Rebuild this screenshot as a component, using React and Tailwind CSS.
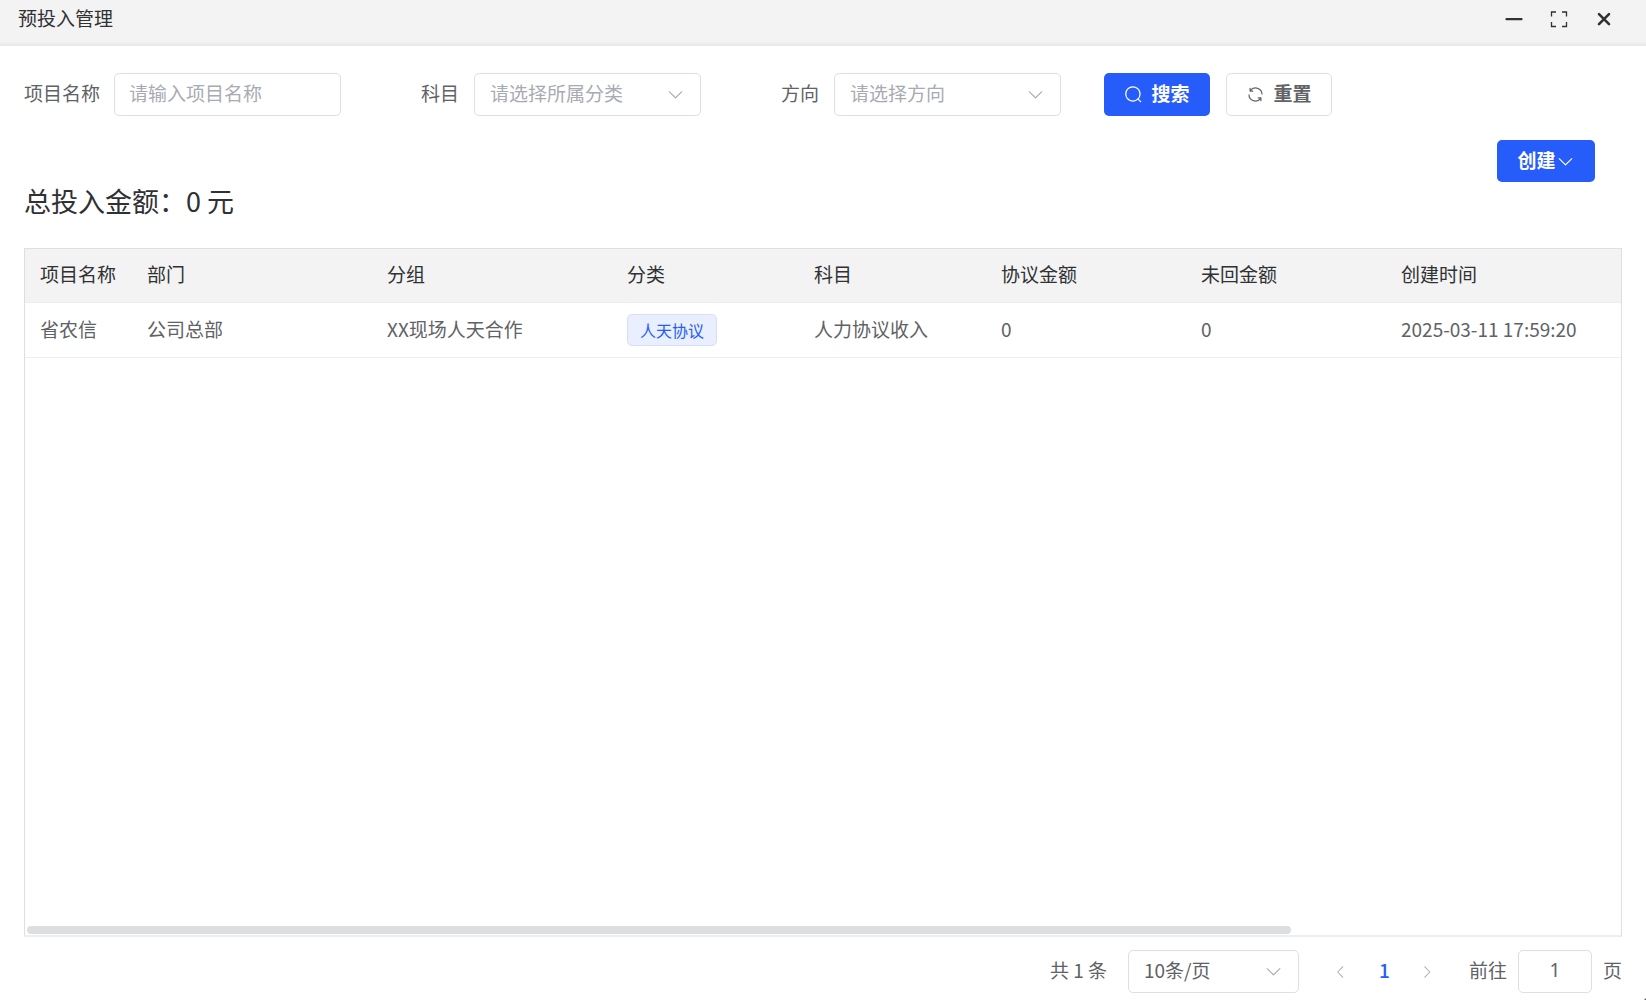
import { useState } from 'react';
import clsx from 'clsx';

const icons = {
    arrowDown: 'M831.872 340.864 512 652.672 192.128 340.864a30.592 30.592 0 0 0-42.752 0 29.12 29.12 0 0 0 0 41.6L489.664 714.24a32 32 0 0 0 44.672 0l340.288-331.712a29.12 29.12 0 0 0 0-41.728 30.592 30.592 0 0 0-42.752 0z',
    arrowLeft: 'M609.408 149.376 277.76 489.6a32 32 0 0 0 0 44.672l331.648 340.352a29.12 29.12 0 0 0 41.728 0 30.592 30.592 0 0 0 0-42.752L339.264 511.936l311.872-319.872a30.592 30.592 0 0 0 0-42.688 29.12 29.12 0 0 0-41.728 0z',
    arrowRight: 'M340.864 149.312a30.592 30.592 0 0 0 0 42.752L652.736 512 340.864 831.872a30.592 30.592 0 0 0 0 42.752 29.12 29.12 0 0 0 41.728 0L714.24 534.336a32 32 0 0 0 0-44.672L382.592 149.376a29.12 29.12 0 0 0-41.728 0z',
    search: 'm795.904 750.72 124.992 124.928a32 32 0 0 1-45.248 45.248L750.656 795.904a416 416 0 1 1 45.248-45.248zM480 832a352 352 0 1 0 0-704 352 352 0 0 0 0 704z',
    refresh: 'M771.776 794.88A384 384 0 0 1 128 512h64a320 320 0 0 0 555.712 216.448H654.72a32 32 0 1 1 0-64h149.056a32 32 0 0 1 32 32v148.928a32 32 0 1 1-64 0v-50.56zM276.288 295.616h92.992a32 32 0 0 1 0 64H220.16a32 32 0 0 1-32-32V178.56a32 32 0 0 1 64 0v50.56A384 384 0 0 1 896.128 512h-64a320 320 0 0 0-555.776-216.384z',
};

const Icon = ({ name, className }) => (
    <svg viewBox="0 0 1024 1024" fill="currentColor" aria-hidden="true" className={clsx('shrink-0', className || 'size-[19px]')}>
        <path d={icons[name]} />
    </svg>
);

const columns = [
    { key: 'project', label: '项目名称', width: 'w-[107px]' },
    { key: 'dept', label: '部门', width: 'w-[240px]' },
    { key: 'group', label: '分组', width: 'w-[240px]' },
    { key: 'category', label: '分类', width: 'w-[187px]' },
    { key: 'subject', label: '科目', width: 'w-[187px]' },
    { key: 'amount', label: '协议金额', width: 'w-[200px]' },
    { key: 'unpaid', label: '未回金额', width: 'w-[200px]' },
    { key: 'createdAt', label: '创建时间', width: '' },
];

const rows = [
    {
        id: 1,
        project: '省农信',
        dept: '公司总部',
        group: 'XX现场人天合作',
        category: '人天协议',
        subject: '人力协议收入',
        amount: 0,
        unpaid: 0,
        createdAt: '2025-03-11 17:59:20',
    },
];

const TitleBar = () => (
    <header className="flex h-[46px] shrink-0 items-start justify-between bg-[#f3f3f3] bg-linear-to-t from-[#e6e6e6] to-[#f3f3f3] to-10% pl-[18px] pr-[33px] text-[#303133]">
        <h1 className="leading-9">预投入管理</h1>
        <div className="flex h-[38px] items-center gap-[27px]">
            <button type="button" aria-label="最小化">
                <svg viewBox="0 0 18 18" className="size-[18px]" fill="none" stroke="currentColor" strokeWidth="2.2" strokeLinecap="round">
                    <path d="M1.500 9.200h15" />
                </svg>
            </button>
            <button type="button" aria-label="最大化">
                <svg viewBox="0 0 18 18" className="size-[18px]" fill="none" stroke="currentColor" strokeWidth="1.3">
                    <path d="M1.500 6.500V2H6M12 2h4.500v4.500M16.500 12v4.500H12M6 16.500H1.500V12" />
                </svg>
            </button>
            <button type="button" aria-label="关闭">
                <svg viewBox="0 0 18 18" className="size-[18px]" fill="none" stroke="currentColor" strokeWidth="2.6" strokeLinecap="round">
                    <path d="M4 4.200l10 10M14 4.200l-10 10" />
                </svg>
            </button>
        </div>
    </header>
);

const SelectBox = ({ id, className, children, ...rest }) => (
    <div className={clsx('relative', className)}>
        <select
            id={id}
            className="h-[43px] w-full appearance-none rounded-[5px] border border-[#dcdfe6] bg-white pb-[3px] pl-[15px] pr-10"
            {...rest}
        >
            {children}
        </select>
        <Icon name="arrowDown" className="pointer-events-none absolute right-4 top-3 size-[19px] text-[#a8abb2]" />
    </div>
);

const FilterForm = () => (
    <form className="flex items-center" onSubmit={(e) => e.preventDefault()}>
        <div className="mr-20 flex items-center">
            <label htmlFor="project" className="w-[90px] pb-[3px]">项目名称</label>
            <input
                id="project"
                type="text"
                placeholder="请输入项目名称"
                className="h-[43px] w-[227px] rounded-[5px] border border-[#dcdfe6] px-[14px] pb-1 placeholder:text-[#a8abb2]"
            />
        </div>
        <div className="mr-20 flex items-center">
            <label htmlFor="subject" className="w-[53px] pb-[3px]">科目</label>
            <SelectBox id="subject" defaultValue="" className="w-[227px] text-[#a8abb2]">
                <option value="">请选择所属分类</option>
            </SelectBox>
        </div>
        <div className="mr-[43px] flex items-center">
            <label htmlFor="direction" className="w-[53px] pb-[3px]">方向</label>
            <SelectBox id="direction" defaultValue="" className="w-[227px] text-[#a8abb2]">
                <option value="">请选择方向</option>
            </SelectBox>
        </div>
        <button type="submit" className="flex h-[43px] w-[106px] items-center justify-center gap-2 rounded-[5px] bg-[#265cf9] font-bold text-white">
            <Icon name="search" />
            <span className="pb-[3px]">搜索</span>
        </button>
        <button type="reset" className="ml-4 flex h-[43px] w-[106px] items-center justify-center gap-2 rounded-[5px] border border-[#dcdfe6] bg-white font-bold">
            <Icon name="refresh" />
            <span className="pb-[3px]">重置</span>
        </button>
    </form>
);

const DataTable = () => (
    <div className="relative min-h-0 flex-1 border border-b-2 border-[#dcdfe6] border-b-[#ebeef5]">
        <div className="h-full overflow-auto [scrollbar-width:none]">
            <table className="w-[126%] table-fixed border-collapse text-left">
                <thead className="bg-[#f3f3f3] text-[#303133]">
                    <tr className="h-[53px] border-b border-[#ebeef5]">
                        {columns.map((col) => (
                            <th key={col.key} className={clsx('px-[15px] pb-0.5 font-normal whitespace-nowrap', col.width)}>{col.label}</th>
                        ))}
                    </tr>
                </thead>
                <tbody>
                    {rows.map((row) => (
                        <tr key={row.id} className="h-[55px] border-b border-[#ebeef5]">
                            {columns.map((col) => (
                                <td key={col.key} className={clsx('px-[15px] whitespace-nowrap', col.key !== 'category' && 'pb-0.5')}>
                                    {col.key === 'category' ? (
                                        <span className="inline-flex h-8 items-center rounded-[5px] border border-[#d4defe] bg-[#e9effe] px-3 align-middle text-base text-[#265cf9]">
                                            {row.category}
                                        </span>
                                    ) : (
                                        row[col.key]
                                    )}
                                </td>
                            ))}
                        </tr>
                    ))}
                </tbody>
            </table>
        </div>
        {/* horizontal scroll thumb */}
        <div className="absolute bottom-px left-0.5 h-2 w-[79.2%] rounded-full bg-[#dddee0]" />
    </div>
);

const Pagination = () => {
    const [page, setPage] = useState('1');

    return (
        <nav className="mt-[13px] flex items-center justify-end">
            <span className="mr-[21px] pb-[3px]">共 1 条</span>
            <SelectBox className="w-[171px]" aria-label="每页条数" defaultValue="10">
                <option value="10">10条/页</option>
            </SelectBox>
            <div className="ml-[21px] mr-5 flex text-[#a8abb2]">
                <button type="button" aria-label="上一页" className="flex w-[43px] items-center justify-center">
                    <Icon name="arrowLeft" className="size-4" />
                </button>
                <button type="button" className="w-[43px] pb-[3px] text-center font-medium text-[#265cf9]">1</button>
                <button type="button" aria-label="下一页" className="flex w-[43px] items-center justify-center">
                    <Icon name="arrowRight" className="size-4" />
                </button>
            </div>
            <label htmlFor="jumper" className="pb-[3px]">前往</label>
            <input
                id="jumper"
                type="text"
                value={page}
                onChange={(e) => setPage(e.target.value)}
                className="mx-[11px] h-[43px] w-[74px] rounded-[5px] border border-[#dcdfe6] pb-[3px] text-center font-['Noto_Sans',sans-serif]"
            />
            <span className="pb-[3px]">页</span>
        </nav>
    );
};

export default function App() {
    return (
        <div className="relative flex h-screen flex-col bg-white font-['Noto_Sans_CJK_SC',sans-serif] text-[19px] leading-7 text-[#606266]">
            <TitleBar />
            <main className="flex min-h-0 flex-1 flex-col px-6 pb-[7px] pt-[27px]">
                <FilterForm />
                <div className="mr-[27px] mt-6 flex justify-end">
                    <button type="button" className="flex h-[42px] w-[98px] items-center justify-center rounded-[5px] bg-[#265cf9] font-bold text-white">
                        <span className="pb-0.5">创建</span>
                        <Icon name="arrowDown" />
                    </button>
                </div>
                <h2 className="mb-7 text-[27px] leading-[38px] text-[#303133]">总投入金额：0 元</h2>
                <DataTable />
                <Pagination />
            </main>
            {/* window resize grip */}
            <svg viewBox="0 0 2 2" aria-hidden="true" className="absolute right-0 bottom-0 size-0.5 fill-[#606266]">
                <path d="M2 0v2H0z" />
            </svg>
        </div>
    );
}
